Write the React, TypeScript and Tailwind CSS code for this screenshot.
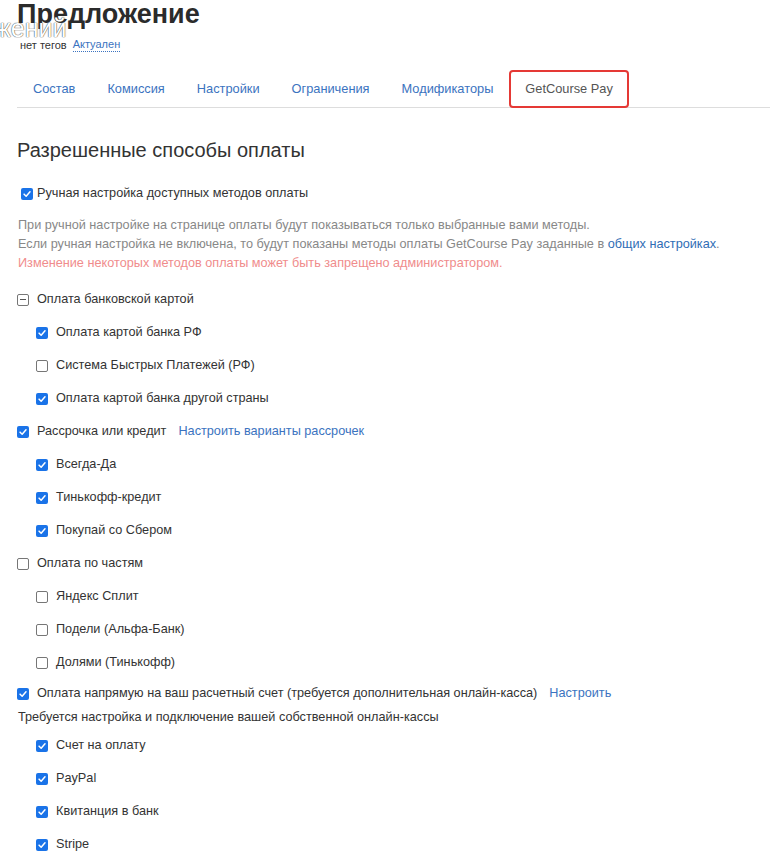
import type { ReactNode } from "react";

type Item = { label: string; checked: boolean };

const tabs = ["Состав", "Комиссия", "Настройки", "Ограничения", "Модификаторы"];

function Box({ checked }: { checked: boolean }) {
  if (checked) {
    return (
      <span className="flex h-[12px] w-[12px] shrink-0 items-center justify-center rounded-[2px] bg-[#1a73e8]">
        <svg viewBox="0 0 12 12" className="h-[10px] w-[10px]">
          <path d="M2.5 6.2 L5 8.6 L9.6 3.4" fill="none" stroke="#fff" strokeWidth="1.8" strokeLinecap="round" strokeLinejoin="round" />
        </svg>
      </span>
    );
  }
  return <span className="h-[12px] w-[12px] shrink-0 rounded-[2px] border border-[#767676] bg-white" />;
}

function Row({ checked, children, sub = false, gap = "gap-[8px]" }: { checked: boolean; children: ReactNode; sub?: boolean; gap?: string }) {
  return (
    <div className={`flex h-[33px] items-center ${gap} ${sub ? "pl-[19px]" : "pl-[0px]"}`}>
      <Box checked={checked} />
      <span className="text-[12.7px] text-[#333]">{children}</span>
    </div>
  );
}

function Group({ head, items }: { head: ReactNode; items: Item[] }) {
  return (
    <div>
      {head}
      {items.map((it) => (
        <Row key={it.label} checked={it.checked} sub>
          {it.label}
        </Row>
      ))}
    </div>
  );
}

export default function App() {
  return (
    <div className="relative min-h-[852px] w-[770px] overflow-hidden bg-white pl-[17px] font-['Liberation_Sans',Arial,sans-serif] text-[#333]">
      <h1 className="text-[27px] font-bold leading-[28px] text-[#2b2b2b]">Предложение</h1>
      <span className="absolute left-[-6px] top-[14px] text-[25px] leading-[28px] text-white [text-shadow:0_0_1px_#444,0_0_1px_#444]">
        жений
      </span>
      <div className="relative flex items-center gap-[6px] pl-[3px] pt-[9px] text-[11px] leading-[14px]">
        <span className="text-[#333]">нет тегов</span>
        <span className="border-b border-dotted border-[#3b73c0] text-[#3b73c0]">Актуален</span>
      </div>

      <div className="mt-[18px] flex border-b border-[#ddd]">
        {tabs.map((t) => (
          <div key={t} className="flex h-[37px] items-center px-[16px] text-[12.8px] text-[#3b73c0]">
            {t}
          </div>
        ))}
        <div className="mb-[-1px] flex h-[38px] items-center rounded-[4px] border-2 border-[#e53935] px-[14px] text-[12.8px] text-[#555]">
          GetCourse Pay
        </div>
      </div>

      <h2 className="mt-[28px] text-[20px] font-light leading-[28px] text-[#333]">Разрешенные способы оплаты</h2>

      <div className="mt-[13px] pl-[4px]">
        <Row checked gap="gap-[4px]">
          Ручная настройка доступных методов оплаты
        </Row>
      </div>

      <div className="mt-[6px] pl-[1px] text-[12.7px] leading-[19px] text-[#888]">
        <p>При ручной настройке на странице оплаты будут показываться только выбранные вами методы.</p>
        <p>
          Если ручная настройка не включена, то будут показаны методы оплаты GetCourse Pay заданные в{" "}
          <span className="text-[#2f6db5]">общих настройках</span>.
        </p>
        <p className="text-[#f08c8c]">Изменение некоторых методов оплаты может быть запрещено администратором.</p>
      </div>

      <div className="mt-[10px]">
        <Group
          head={
            <div className="flex h-[33px] items-center gap-[8px]">
              <span className="flex h-[12px] w-[12px] shrink-0 items-center justify-center rounded-[2px] border border-[#767676]">
                <span className="h-[1px] w-[6px] bg-[#555]" />
              </span>
              <span className="text-[12.7px] text-[#333]">Оплата банковской картой</span>
            </div>
          }
          items={[
            { label: "Оплата картой банка РФ", checked: true },
            { label: "Система Быстрых Платежей (РФ)", checked: false },
            { label: "Оплата картой банка другой страны", checked: true },
          ]}
        />
        <Group
          head={
            <Row checked>
              Рассрочка или кредит<span className="ml-[12px] text-[#3b73c0]">Настроить варианты рассрочек</span>
            </Row>
          }
          items={[
            { label: "Всегда-Да", checked: true },
            { label: "Тинькофф-кредит", checked: true },
            { label: "Покупай со Сбером", checked: true },
          ]}
        />
        <Group
          head={<Row checked={false}>Оплата по частям</Row>}
          items={[
            { label: "Яндекс Сплит", checked: false },
            { label: "Подели (Альфа-Банк)", checked: false },
            { label: "Долями (Тинькофф)", checked: false },
          ]}
        />
        <div className="flex h-[29px] items-center gap-[8px]">
          <Box checked />
          <span className="text-[12.7px] text-[#333]">
            Оплата напрямую на ваш расчетный счет (требуется дополнительная онлайн-касса)
            <span className="ml-[12px] text-[#3b73c0]">Настроить</span>
          </span>
        </div>
        <p className="pl-[1px] text-[12.7px] leading-[19px] text-[#333]">
          Требуется настройка и подключение вашей собственной онлайн-кассы
        </p>
        <div className="mt-[2px]">
          {["Счет на оплату", "PayPal", "Квитанция в банк", "Stripe"].map((l) => (
            <Row key={l} checked sub>
              {l}
            </Row>
          ))}
        </div>
      </div>
    </div>
  );
}
